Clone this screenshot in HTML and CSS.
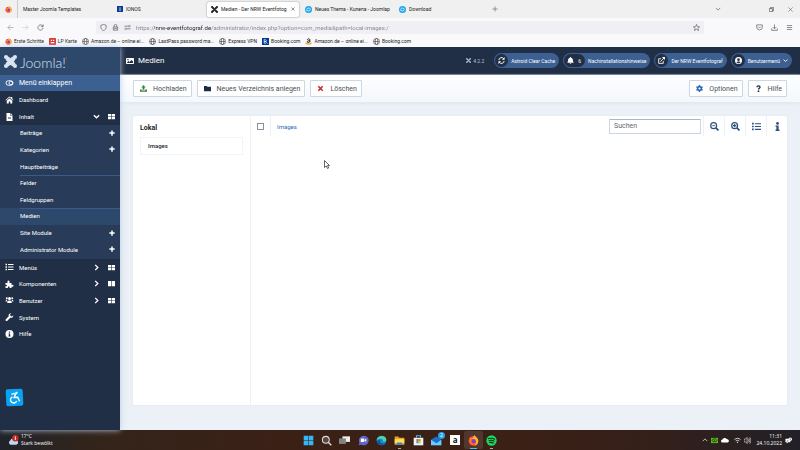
FILE: index.html
```html
<!DOCTYPE html>
<html lang="de">
<head>
<meta charset="utf-8">
<title>Medien - Der NRW Eventfotograf</title>
<link rel="stylesheet" href="styles.css">
</head>
<body>
<svg class="defs" aria-hidden="true">
  <symbol id="joomla" viewBox="0 0 16 16"><g fill="none" stroke="currentColor" stroke-width="2.800"><path d="M3 3l8 8M13 3l-8 8M3 13l8-8M13 13L5 5"/><path d="M5 2.500L8 5.500l3-3M5 13.500l3-3 3 3M2.500 5l3 3-3 3M13.500 5l-3 3 3 3" stroke-width="2"/></g><circle cx="2.500" cy="2.500" r="2.500"/><circle cx="13.500" cy="2.500" r="2.500"/><circle cx="2.500" cy="13.500" r="2.500"/><circle cx="13.500" cy="13.500" r="2.500"/></symbol>
  <symbol id="firefox" viewBox="0 0 16 16"><circle cx="8" cy="8.500" r="7" fill="#ff4b35"/><path d="M2 5c2-1 3 0 4 0 2-1 2-4 4-5 0 3 5 4 5 9a7 7 0 0 1-6 6.500c4-3 3-8 0-9C6 5 4 8 2 5z" fill="#ffb52b"/><circle cx="8" cy="9" r="3.200" fill="#7542c8"/><path d="M1 8c2 0 3-2 6-1l-2 2c0 3 4 4 6 2-1 4-9 5-10-3z" fill="#ff6b2b"/></symbol>
  <symbol id="globe" viewBox="0 0 16 16"><g fill="none" stroke="currentColor" stroke-width="1.200"><circle cx="8" cy="8" r="7"/><ellipse cx="8" cy="8" rx="3" ry="7"/><path d="M1.500 8h13"/></g></symbol>
  <symbol id="kunena" viewBox="0 0 16 16"><circle cx="8" cy="8" r="8" fill="#1ca6ed"/><path d="M4 11V8a4 4 0 0 1 7-2M12 6v2a4 4 0 0 1-7 2" fill="none" stroke="#fff" stroke-width="1.600"/></symbol>
  <symbol id="plus" viewBox="0 0 16 16"><path d="M6 1h4v5h5v4h-5v5H6v-5H1V6h5z"/></symbol>
  <symbol id="grid" viewBox="0 0 16 16"><path d="M0 2h7.300v5.400H0zM8.700 2H16v5.400H8.700zM0 8.700h7.300V14H0zM8.700 8.700H16V14H8.700z"/></symbol>
  <symbol id="columns" viewBox="0 0 16 16"><path d="M0 2h7.300v12H0zM8.700 2H16v12H8.700z"/></symbol>
  <symbol id="down" viewBox="0 0 16 16"><path d="M2 5l6 6 6-6" fill="none" stroke="currentColor" stroke-width="3"/></symbol>
  <symbol id="right" viewBox="0 0 16 16"><path d="M5 2l6 6-6 6" fill="none" stroke="currentColor" stroke-width="3"/></symbol>
  <symbol id="thin-down" viewBox="0 0 16 16"><path d="M2 5l6 6 6-6" fill="none" stroke="currentColor" stroke-width="1.500"/></symbol>
  <symbol id="list" viewBox="0 0 16 16"><path d="M0 1.500h3v3H0zM5 2h11v2H5zM0 6.500h3v3H0zM5 7h11v2H5zM0 11.500h3v3H0zM5 12h11v2H5z"/></symbol>
  <symbol id="info" viewBox="0 0 16 16"><circle cx="8" cy="2.500" r="2.500"/><path d="M4.500 6H10v7.500h1.500V16h-7v-2.500H6v-5H4.500z"/></symbol>
  <symbol id="external" viewBox="0 0 16 16"><path d="M12 9v5.500H1.500V4H7M5.500 10.500L14 2" fill="none" stroke="currentColor" stroke-width="2"/><path d="M9 0h7v7z"/></symbol>
  <symbol id="lens" viewBox="0 0 16 16"><path d="M10.500 10.500L15 15" stroke="currentColor" stroke-width="3"/><circle cx="6.500" cy="6.500" r="5.200" fill="none" stroke="currentColor" stroke-width="2.200"/></symbol>
</svg>

<header class="browser">
  <div class="tabs">
    <div class="pin"><svg class="i7"><use href="#firefox"/></svg></div>
    <div class="tab"><span class="label">Master Joomla Templates</span></div>
    <div class="tab"><svg class="i6" viewBox="0 0 16 16"><path fill="#0b3d91" d="M0 0h16v16H0z"/><path fill="#fff" d="M7 3h2v10H7z"/></svg><span class="label">IONOS</span></div>
    <div class="tab active"><svg class="i7"><use href="#joomla"/></svg><span class="label">Medien - Der NRW Eventfotog</span><button class="plain" aria-label="Tab schließen"><svg class="i4" viewBox="0 0 16 16"><path d="M2 2l12 12M14 2L2 14" stroke="currentColor" stroke-width="2"/></svg></button></div>
    <div class="tab"><svg class="i7"><use href="#kunena"/></svg><span class="label">Neues Thema - Kunena - Joomlap</span></div>
    <div class="tab"><svg class="i7"><use href="#kunena"/></svg><span class="label">Download</span></div>
    <button class="plain newtab" aria-label="Neuer Tab"><svg class="i6" viewBox="0 0 16 16"><path d="M8 1v14M1 8h14" stroke="currentColor" stroke-width="1.500"/></svg></button>
    <div class="window">
      <button class="plain" aria-label="Tabs auflisten"><svg class="i6"><use href="#thin-down"/></svg></button>
      <button class="plain restore" aria-label="Verkleinern"><svg class="i5" viewBox="0 0 16 16"><path d="M1 5h10v10H1zM5 5V1h10v11h-4" fill="none" stroke="currentColor" stroke-width="2"/></svg></button>
      <button class="plain" aria-label="Schließen"><svg class="i5" viewBox="0 0 16 16"><path d="M1 1l14 14M15 1L1 15" stroke="currentColor" stroke-width="1.500"/></svg></button>
    </div>
  </div>
  <div class="navbar">
    <div class="history">
      <button class="plain" aria-label="Zurück"><svg class="i7" viewBox="0 0 16 16"><path d="M15 8H2M8 2L2 8l6 6" fill="none" stroke="#999" stroke-width="1.500"/></svg></button>
      <button class="plain" aria-label="Vor"><svg class="i7" viewBox="0 0 16 16"><path d="M1 8h13M8 2l6 6-6 6" fill="none" stroke="#ccc" stroke-width="1.500"/></svg></button>
      <button class="plain" aria-label="Neu laden"><svg class="i7" viewBox="0 0 16 16"><path d="M14 9a6 6 0 1 1-2-5.500L14 5M14 1v5H9" fill="none" stroke="#555" stroke-width="1.500"/></svg></button>
    </div>
    <div class="urlbar">
      <svg class="i7" viewBox="0 0 16 16"><path d="M8 1l6 2v4c0 4-2 6.500-6 8-4-1.500-6-4-6-8V3z" fill="none" stroke="currentColor" stroke-width="1.500"/></svg>
      <svg class="i7" viewBox="0 0 16 16"><path d="M3 7h10v7H3zM5 7V4a3 3 0 0 1 6 0v3M5 10.500h6" fill="none" stroke="currentColor" stroke-width="1.500"/></svg>
      <svg class="i7" viewBox="0 0 16 16"><path d="M1 5h10M5 11h10" stroke="currentColor" stroke-width="1.500"/><circle cx="12.500" cy="5" r="2" fill="none" stroke="currentColor"/><circle cx="3.500" cy="11" r="2" fill="none" stroke="currentColor"/></svg>
      <input class="url" aria-label="Adresse" value="https://nrw-eventfotograf.de/administrator/index.php?option=com_media&amp;path=local-images:/">
      <button class="plain" aria-label="Lesezeichen setzen"><svg class="i7" viewBox="0 0 16 16"><path d="M8 1l2 5 5 .5-3.800 3.300L12.500 15 8 12l-4.500 3 1.300-5.200L1 6.500 6 6z" fill="none" stroke="#444" stroke-width="1.300"/></svg></button>
    </div>
    <div class="tools">
      <button class="plain" aria-label="Pocket"><svg class="i7" viewBox="0 0 16 16"><path d="M1.500 2h13v5a6.500 6.500 0 0 1-13 0zM5 6l3 3 3-3" fill="none" stroke="currentColor" stroke-width="1.500"/></svg></button>
      <button class="plain" aria-label="Downloads"><svg class="i7" viewBox="0 0 16 16"><path d="M8 1v9M4 7l4 4 4-4M1.500 10v4.500h13V10" fill="none" stroke="currentColor" stroke-width="1.500"/></svg></button>
      <button class="plain" aria-label="Menü"><svg class="i7" viewBox="0 0 16 16"><path d="M2 3.500h12M2 8h12M2 12.500h12" stroke="currentColor" stroke-width="1.500"/></svg></button>
    </div>
  </div>
  <nav class="bookmarks">
    <a href="#"><svg class="i7"><use href="#firefox"/></svg>Erste Schritte</a>
    <a href="#"><svg class="i7" viewBox="0 0 16 16"><rect width="16" height="16" rx="2" fill="#d93a32"/><path d="M4 4h3v3H4zM9 4h3v3H9zM4 9h8v3H4z" fill="#fff"/></svg>LP Karte</a>
    <a href="#"><svg class="i7"><use href="#globe"/></svg>Amazon.de – online ei...</a>
    <a href="#"><svg class="i7"><use href="#globe"/></svg>LastPass password ma...</a>
    <a href="#"><svg class="i7"><use href="#globe"/></svg>Express VPN</a>
    <a href="#"><svg class="i7" viewBox="0 0 16 16"><path fill="#003b95" d="M0 0h16v16H0z"/><path d="M5 3v9h3a2 2 0 0 0 0-4H5h3a2 2 0 0 0 0-4H5" fill="none" stroke="#fff" stroke-width="1.500"/><circle cx="12.500" cy="12" r="1.200" fill="#4bb8ff"/></svg>Booking.com</a>
    <a href="#"><svg class="i7" viewBox="0 0 16 16"><path d="M5 4c1-3 6-3 6 0v6M11 6C7 6 5 7 5 9s4 2 6-1" fill="none" stroke="#111" stroke-width="2"/><path d="M1 11c5 4 10 4 14 0" fill="none" stroke="#f90" stroke-width="2.500"/></svg>Amazon.de – online ei...</a>
    <a href="#"><svg class="i7"><use href="#globe"/></svg>Booking.com</a>
  </nav>
</header>

<div class="admin">
  <aside class="sidebar">
    <a class="brand" href="#"><svg class="i13"><use href="#joomla"/></svg><span>Joomla!<sup>’</sup></span></a>
    <button class="row toggle"><svg class="icon" viewBox="0 0 16 16"><rect x="1" y="3.500" width="14" height="9" rx="4.500" fill="none" stroke="currentColor" stroke-width="1.800"/><circle cx="10.500" cy="8" r="3.500" fill="none" stroke="currentColor" stroke-width="1.800"/></svg>Menü einklappen</button>
    <a class="row" href="#"><svg class="icon" viewBox="0 0 16 16"><path d="M0 8l8-7 3 2.600V2h2.500v3.800L16 8l-1 1.200-7-6-7 6z"/><path d="M2.500 9.500L8 5l5.500 4.500V15h-4v-4h-3v4h-4z"/></svg>Dashboard</a>
    <a class="row" href="#"><svg class="icon" viewBox="0 0 16 16"><path fill-rule="evenodd" d="M2 0h7v5h5v11H2zM5 8v1h6V8zM5 11v1h6v-1z"/><path d="M10 0l4 4h-4z"/></svg><span class="name">Inhalt</span><svg class="i7"><use href="#down"/></svg><svg class="i7"><use href="#grid"/></svg></a>
    <ul class="submenu">
      <li><a href="#">Beiträge</a><a href="#" aria-label="Neuer Beitrag"><svg class="i6"><use href="#plus"/></svg></a></li>
      <li><a href="#">Kategorien</a><a href="#" aria-label="Neue Kategorie"><svg class="i6"><use href="#plus"/></svg></a></li>
      <li><a href="#">Hauptbeiträge</a></li>
      <li class="ruled"><a href="#">Felder</a></li>
      <li><a href="#">Feldgruppen</a></li>
      <li class="ruled current"><a href="#">Medien</a></li>
      <li><a href="#">Site Module</a><a href="#" aria-label="Neues Site Modul"><svg class="i6"><use href="#plus"/></svg></a></li>
      <li><a href="#">Administrator Module</a><a href="#" aria-label="Neues Administrator Modul"><svg class="i6"><use href="#plus"/></svg></a></li>
    </ul>
    <nav class="mainmenu">
      <a class="row" href="#"><svg class="icon"><use href="#list"/></svg><span class="name">Menüs</span><svg class="i7"><use href="#right"/></svg><svg class="i7"><use href="#grid"/></svg></a>
      <a class="row" href="#"><svg class="icon" viewBox="0 0 16 16"><path d="M0 6h4.500C3 4 4 1 6 1s3 3 1.500 5H12v4c2-1.500 4-.5 4 1.500s-2 3-4 1.500v3H8c1-2 0-3-1.500-3S4 14 5 16H0v-4c2 1 3 0 3-1s-1-2-3-1z"/></svg><span class="name">Komponenten</span><svg class="i7"><use href="#right"/></svg><svg class="i7"><use href="#columns"/></svg></a>
      <a class="row" href="#"><svg class="icon" viewBox="0 0 16 16"><circle cx="8" cy="5" r="3"/><circle cx="2.500" cy="4.500" r="2"/><circle cx="13.500" cy="4.500" r="2"/><path d="M3.500 14v-2c0-4 9-4 9 0v2zM0 11c0-3.500 3-4 4-3C3 9 2.500 10 2.500 11zM16 11c0-3.500-3-4-4-3 1 .5 1.500 2 1.500 3z"/></svg><span class="name">Benutzer</span><svg class="i7"><use href="#right"/></svg><svg class="i7"><use href="#grid"/></svg></a>
      <a class="row" href="#"><svg class="icon" viewBox="0 0 16 16"><path d="M15.500 4.500L13 7l-3-1-1-3 2.500-2.500C8 0 5.500 3 6.500 6.500L.7 12.300a2 2 0 0 0 3 3l5.800-5.800c3.500 1 6.500-1.500 6-5z"/></svg><span class="name">System</span></a>
      <a class="row" href="#"><svg class="icon" viewBox="0 0 16 16"><path fill-rule="evenodd" d="M8 0a8 8 0 1 0 0 16A8 8 0 0 0 8 0zM6.800 3h2.400v2.400H6.800zM6 6.800h3.200v4.400H10V13H6v-1.800h.8V8.500H6z"/></svg><span class="name">Hilfe</span></a>
    </nav>
    <button class="access" aria-label="Barrierefreiheit"><svg viewBox="0 0 16 16"><g fill="none" stroke="#fff" stroke-width="1.700"><path d="M4.500 4L7.500 3l2 1.500L7.500 8H12l2 5M5.500 7a4 4 0 1 0 5 5.500"/></g><circle cx="10.700" cy="2.500" r="1.500" fill="#fff"/></svg></button>
  </aside>

  <div class="page">
    <div class="topbar">
      <h1><svg class="i8" viewBox="0 0 16 16"><path fill-rule="evenodd" d="M1.500 2h13A1.500 1.500 0 0 1 16 3.500v9a1.500 1.500 0 0 1-1.500 1.500h-13A1.500 1.500 0 0 1 0 12.500v-9A1.500 1.500 0 0 1 1.500 2zM2 12h12V9l-3-3-4 4-2-2-3 3zM4 4a1.500 1.500 0 1 0 0 3 1.500 1.500 0 0 0 0-3z"/></svg>Medien</h1>
      <span class="version"><svg class="i5"><use href="#joomla"/></svg>4.2.2</span>
      <button class="pill"><span class="knob"><svg class="i7" viewBox="0 0 16 16"><path d="M2 7a6 6 0 0 1 11-3M14 9a6 6 0 0 1-11 3" fill="none" stroke="currentColor" stroke-width="2.200"/><path d="M15 0v6.500H9zM1 16V9.500h6z"/></svg></span>Astroid Clear Cache</button>
      <button class="pill"><span class="knob wide"><svg class="i7" viewBox="0 0 16 16"><path d="M7 0h2v1.500c3 .5 4.500 3 4.500 5.500 0 3 .5 3.500 1.500 5v1H1v-1c1-1.500 1.500-2 1.500-5C2.500 4.500 4 2 7 1.500zM6 14h4c0 2.500-4 2.500-4 0z"/></svg>6</span>Nachinstallationshinweise</button>
      <a class="pill" href="#"><span class="knob"><svg class="i7"><use href="#external"/></svg></span>Der NRW Eventfotograf</a>
      <button class="pill"><span class="knob"><svg class="i7" viewBox="0 0 16 16"><path fill-rule="evenodd" d="M8 0a8 8 0 1 0 0 16A8 8 0 0 0 8 0zM8 3a3 3 0 1 1 0 6 3 3 0 0 1 0-6zM3.500 12.500c1-3 8-3 9 0-2 2.500-7 2.500-9 0z"/></svg></span>Benutzermenü<svg class="i5"><use href="#down"/></svg></button>
    </div>

    <div class="toolbar">
      <button class="btn upload"><svg class="i7" viewBox="0 0 16 16"><path d="M8 0l5 5.500h-3V11H6V5.500H3zM0 10h4v2.500h8V10h4v5.500H0z"/></svg>Hochladen</button>
      <button class="btn folder"><svg class="i7" viewBox="0 0 16 16"><path d="M0 2h6l2 2h8v10H0z"/></svg>Neues Verzeichnis anlegen</button>
      <button class="btn delete"><svg class="i7" viewBox="0 0 16 16"><path d="M3 3l10 10M13 3L3 13" stroke="currentColor" stroke-width="3.500"/></svg>Löschen</button>
      <span class="spacer"></span>
      <button class="btn options"><svg class="i7" viewBox="0 0 16 16"><path fill-rule="evenodd" d="M6.500 0h3l.5 2.300 2 1.100 2.300-.7 1.500 2.600L14 7v2l1.800 1.700-1.500 2.600-2.300-.7-2 1.100-.5 2.300h-3L6 13.700l-2-1.100-2.300.7-1.500-2.600L2 9V7L.2 5.300l1.500-2.600 2.300.7 2-1.100zM8 5.500a2.500 2.500 0 1 0 0 5 2.500 2.500 0 0 0 0-5z"/></svg>Optionen</button>
      <button class="btn help"><svg class="i7" viewBox="0 0 16 16"><path d="M4.500 5c0-4 7-4 7 0 0 2.500-3.500 2-3.500 5.500" fill="none" stroke="currentColor" stroke-width="3"/><circle cx="8" cy="14" r="2"/></svg>Hilfe</button>
    </div>

    <main class="media">
      <nav class="tree">
        <h2>Lokal</h2>
        <a href="#">Images</a>
      </nav>
      <section class="browserpane">
        <div class="mediabar">
          <label class="check"><input type="checkbox" aria-label="Alle auswählen"></label>
          <a class="crumb" href="#">Images</a>
          <input class="search" type="text" placeholder="Suchen" aria-label="Suchen">
          <button class="tool" aria-label="Verkleinern"><svg class="i9" viewBox="0 0 16 16"><use href="#lens"/><path d="M4 6.500h5" stroke="currentColor" stroke-width="1.500"/></svg></button>
          <button class="tool" aria-label="Vergrößern"><svg class="i9" viewBox="0 0 16 16"><use href="#lens"/><path d="M3.500 6.500h6M6.500 3.500v6" stroke="currentColor" stroke-width="2"/></svg></button>
          <button class="tool" aria-label="Liste"><svg class="i9"><use href="#list"/></svg></button>
          <button class="tool" aria-label="Info"><svg class="i9"><use href="#info"/></svg></button>
        </div>
      </section>
    </main>
  </div>
</div>

<footer class="taskbar">
  <button class="weather">
    <svg class="cloud" viewBox="0 0 24 24"><path d="M5 21a5 5 0 0 1 0-9 6 6 0 0 1 11-1 5 5 0 0 1 2 10z" fill="#bcd7f7"/><circle cx="16" cy="7" r="7" fill="#c9271e"/><path d="M16 3v8" stroke="#fff" stroke-width="2"/></svg>
    <span>17°C<br>Stark bewölkt</span>
  </button>
  <div class="apps">
    <button aria-label="Start"><svg viewBox="0 0 16 16"><path fill="#35b8f5" d="M1 1h6.600v6.600H1zM8.400 1H15v6.600H8.400zM1 8.400h6.600V15H1zM8.400 8.400H15V15H8.400z"/></svg></button>
    <button aria-label="Suche"><svg viewBox="0 0 16 16"><path d="M10.500 10.500L15 15" stroke="#ddd" stroke-width="2"/><circle cx="7" cy="7" r="5" fill="#5a4741" stroke="#ddd" stroke-width="1.500"/></svg></button>
    <button aria-label="Taskansicht"><svg viewBox="0 0 16 16"><path fill="#eee" d="M5 2h11v8H5z"/><path fill="#85817f" d="M0 5h10v8H0z"/></svg></button>
    <button aria-label="Chat"><svg viewBox="0 0 16 16"><path d="M8 1a7 7 0 1 1-3 13l-4 1 1-4A7 7 0 0 1 8 1z" fill="#6264c7"/><path d="M4 5h5v5H4zM9 7.500L12 5v5z" fill="#fff"/></svg></button>
    <button aria-label="Edge"><svg viewBox="0 0 16 16"><circle cx="8" cy="8" r="7" fill="#1686d9"/><path d="M1 8C1 0 15-1 15 7c0 3-5 4-5 1S4 4 1 8z" fill="#50d2a0"/><path d="M6 7c-2 4 3 7 8 5-3 4-12 3-12-2 0-3 3-3 4-3z" fill="#0b559e"/></svg></button>
    <button class="open" aria-label="Explorer"><svg viewBox="0 0 16 16"><path fill="#e7a51b" d="M1 2h5l2 2h7v10H1z"/><path fill="#ffdc65" d="M1 6h14v6H1z"/><path fill="#2d86ce" d="M4 11h8v3H4z"/></svg></button>
    <button aria-label="Store"><svg viewBox="0 0 16 16"><path fill="#f2f2f2" d="M1 4h14v11H1z"/><path d="M5 4V1h6v3" fill="none" stroke="#5ab8e8" stroke-width="1.500"/><path fill="#e54c2e" d="M5 6h3v3H5z"/><path fill="#6bb52c" d="M8 6h3v3H8z"/><path fill="#1b94e0" d="M5 9h3v3H5z"/><path fill="#f5b51b" d="M8 9h3v3H8z"/></svg></button>
    <button class="mail" aria-label="Mail"><svg viewBox="0 0 16 16"><path fill="#1773c7" d="M0 7l8-5 7 5v8H0z"/><path fill="#76c8fa" d="M0 7l8 5 7-5v8H0z"/></svg><span class="badge">2</span></button>
    <button aria-label="Amazon"><span class="amazon">a</span></button>
    <button class="open running" aria-label="Firefox"><svg><use href="#firefox"/></svg></button>
    <button class="open" aria-label="Spotify"><svg viewBox="0 0 16 16"><circle cx="8" cy="8" r="7.500" fill="#1ed760"/><path d="M3 5.500c3-1 7-1 10 1M4 8.300c3-1 6-.5 8 1M4.500 11c2-.5 4.500-.5 6.500 1" fill="none" stroke="#10301c" stroke-width="1.600"/></svg></button>
  </div>
  <div class="tray">
    <svg class="i6" viewBox="0 0 16 16"><path d="M2 11l6-6 6 6" fill="none" stroke="currentColor" stroke-width="1.800"/></svg>
    <svg class="i7" viewBox="0 0 16 16"><path d="M0 2h16v12H0z" fill="#62b51e"/><path d="M2 8c3-5 9-5 12 0-3 4-9 4-12 0zM6 6l4 4" fill="none" stroke="#173b08" stroke-width="1.800"/></svg>
    <svg class="i8" viewBox="0 0 16 16"><path d="M3 13a3 3 0 0 1 0-6c1-4 7-4 8-1 6 0 6 7 2 7z"/></svg>
    <span class="status"><svg class="i7" viewBox="0 0 16 16"><path d="M1 6c4-4 10-4 14 0M4 9c3-2 5-2 8 0" fill="none" stroke="currentColor" stroke-width="1.700"/><path d="M6 11h4l-2 3z"/></svg>
    <svg class="i7" viewBox="0 0 16 16"><path d="M0 5h3l4-4v14l-4-4H0zM9 5c2 2 2 4 0 6M11 3c3 3 3 7 0 10M13 1c4 4 4 10 0 14" fill="none" stroke="currentColor" stroke-width="1.300"/></svg></span>
    <span class="clock">11:31<br>24.10.2022</span>
    <svg class="i7" viewBox="0 0 16 16"><path d="M1 4h11v8H7l-3 3v-3H1z"/><circle cx="12" cy="5" r="4"/><path d="M12 3v4M4 9h4" stroke="#333" stroke-width="1.500"/></svg>
  </div>
</footer>

<svg class="cursor" viewBox="0 0 12 18" aria-hidden="true"><path d="M1 1v14l3.500-3 2.500 5 2.500-1.200L7 11h4z" fill="#fff" stroke="#222" stroke-width="1.400"/></svg>
</body>
</html>
```
FILE: styles.css
```css
* { box-sizing: border-box; }

body {
  margin: 0;
  min-height: 100vh;
  display: flex;
  flex-direction: column;
  font-family: Roboto, sans-serif;
  font-size: 6px;
  color: #22262a;
  background: #ebf1f6;
}

button, input { font: inherit; color: inherit; margin: 0; }
button { border: 0; padding: 0; background: none; }
a { color: inherit; text-decoration: none; }
svg { display: block; flex: none; fill: currentColor; }

.defs { position: absolute; width: 0; height: 0; }
.i4 { width: 4px; height: 4px; }
.i5 { width: 5px; height: 5px; }
.i6 { width: 6px; height: 6px; }
.i7 { width: 7px; height: 7px; }
.i8 { width: 8px; height: 8px; }
.i9 { width: 9px; height: 9px; }
.i13 { width: 13px; height: 13px; }

/* Browser window */
.browser { font-size: 5px; background: #f9f9fb; color: #222; }
.plain { display: flex; align-items: center; }

.tabs { display: flex; align-items: center; height: 18px; background: #f0f0f0; }
.pin { display: flex; align-items: center; justify-content: center; width: 18px; height: 18px; border-right: 1px solid #ccc; }
.tab { display: flex; align-items: center; gap: 3px; width: 92px; height: 15px; margin: 0 1px; padding: 0 4px; white-space: nowrap; }
.tab.active { background: #fff; border-radius: 2px; box-shadow: 0 0 2px #888; }
.label { flex: 1; }
.newtab { margin-left: 4px; color: #555; }
.window { display: flex; align-items: center; gap: 14px; margin-left: auto; padding-right: 7px; color: #444; }
.restore { margin-left: 34px; }

.navbar { display: flex; align-items: center; height: 18px; color: #555; }
.history { display: flex; gap: 8px; width: 96px; padding-left: 7px; }
.urlbar { flex: 1; display: flex; align-items: center; gap: 5px; height: 13px; padding: 0 4px; border-radius: 2px; background: #f0f0f4; }
.url { flex: 1; min-width: 0; border: 0; padding: 0; font-size: 6px; color: transparent; background: linear-gradient(to right, #83838a 18px, #222 18px, #222 75px, #83838a 75px) text; }
.tools { display: flex; justify-content: flex-end; gap: 8px; width: 96px; padding-right: 7px; }

.bookmarks { display: flex; align-items: center; gap: 5px; height: 11px; padding-left: 5px; padding-bottom: 1px; white-space: nowrap; }
.bookmarks a { display: flex; align-items: center; gap: 2px; }

/* Administrator */
.admin { flex: 1; display: flex; }
.sidebar { position: relative; flex: none; width: 120px; background: #212f46; color: #fff; box-shadow: 0 0 6px #b9cbe3; }
.brand { display: flex; align-items: center; gap: 3px; height: 28px; padding-left: 4px; background: #2e486c; font-family: Lato, sans-serif; font-weight: 300; font-size: 14px; line-height: 16px; color: #dce6f2; }
.brand sup { font-size: 6px; }
.row { display: flex; align-items: center; gap: 8px; height: 17px; padding: 0 5px; }
.row .icon { width: 9px; height: 8px; margin-right: -3px; }
.name { flex: 1; }
.toggle { width: 100%; height: 16px; background: #3d6092; font-size: 7px; }

.submenu { display: grid; grid-auto-rows: 1fr; min-height: 134px; margin: 0; padding: 0 0 1px; list-style: none; background: #283c5a; }
.submenu li { display: flex; align-items: center; justify-content: space-between; padding: 0 5px 1px 20px; }
.ruled { background: linear-gradient(#3a5a87, #3a5a87) 20px 0 / 100% 1px no-repeat; }
.current { background-color: #2e486c; }
.mainmenu { display: grid; grid-auto-rows: 1fr; min-height: 83px; }
.mainmenu .row { height: auto; }

.access { position: absolute; left: 6px; bottom: 24px; width: 17px; height: 17px; padding: 2px; border-radius: 2px; background: #0aa2f0; transform: rotate(-3deg); }
.access svg { width: 13px; height: 13px; }

.page { flex: 1; min-width: 0; display: flex; flex-direction: column; }
.topbar { display: flex; align-items: center; gap: 4px; height: 28px; padding: 0 8px 0 6px; background: #212f46; color: #fff; border-bottom: 1px solid #61708a; font-size: 5px; white-space: nowrap; }
.topbar h1 { display: flex; align-items: center; gap: 4px; margin: 0 auto 0 0; font-size: 8px; font-weight: 400; }
.version { display: flex; align-items: center; gap: 2px; margin-right: 6px; color: #b8c3d3; }
.pill { display: flex; align-items: center; gap: 3px; height: 15px; padding: 0 4px 0 1px; border-radius: 8px; background: #3d6092; color: #fff; }
.knob { display: flex; align-items: center; justify-content: center; gap: 4px; min-width: 13px; height: 13px; border-radius: 7px; background: #212f46; }
.knob.wide { padding: 0 4px 0 3px; }

.toolbar { display: flex; align-items: center; gap: 5px; padding: 5px 13px; background: linear-gradient(#fdfeff, #f4f7fb); box-shadow: 0 1px 3px #dbe4ee; font-size: 7px; white-space: nowrap; }
.btn { display: flex; align-items: center; gap: 6px; height: 17px; padding: 0 4px 0 6px; border: 1px solid #cdd7e4; border-radius: 1px; background: #fff; color: #495057; }
.spacer { flex: 1; }
.upload svg { color: #3b8247; }
.folder svg, .help svg { color: #1b2c47; }
.delete svg { color: #c52827; }
.options svg { color: #2a69b8; }

.media { flex: 1; display: flex; margin: 14px 13px 25px; background: #fff; border-radius: 2px; box-shadow: 0 0 2px #dbe4ee; }
.tree { width: 118px; padding: 7px; border-right: 1px solid #ebf1f6; }
.tree h2 { margin: 0; font-size: 7px; line-height: 10px; font-weight: 700; }
.tree a { display: block; margin-top: 4px; padding: 0 7px; border: 1px solid #f2f4f8; line-height: 16px; font-weight: 500; }
.browserpane { flex: 1; }
.mediabar { display: flex; align-items: center; height: 20px; }
.check { display: flex; align-items: center; justify-content: center; width: 20px; height: 20px; border-right: 1px solid #ebf1f6; }
.check input { appearance: none; width: 7px; height: 7px; border: 1px solid #85909d; background: #fff; }
.crumb { flex: 1; padding-left: 6px; color: #2a69b8; }
.search { width: 92px; height: 15px; margin-right: 2px; padding: 0 4px; border: 1px solid #ccd6e3; border-top-color: #a9b9cc; border-radius: 1px; background: #fff; font-size: 7px; }
.search::placeholder { color: #60686f; opacity: 1; }
.tool { display: flex; align-items: center; justify-content: center; width: 21px; height: 20px; border-left: 1px solid #ebf1f6; color: #2f5080; }

/* Desktop taskbar */
.taskbar { display: grid; grid-template-columns: 1fr auto 1fr; align-items: center; height: 20px; padding: 0 8px; background: linear-gradient(to right, #20232a, #33241a 12%, #3b2016 35%, #3b2016 65%, #34201a 82%, #222027); color: #fff; font-family: "Open Sans", sans-serif; font-size: 5px; line-height: 7px; }
.weather { display: flex; align-items: center; gap: 2px; text-align: left; }
.cloud { width: 11px; height: 11px; }
.apps { display: grid; grid-template-columns: repeat(11, 1fr); width: 202px; }
.apps button { position: relative; display: flex; align-items: center; justify-content: center; height: 18px; border-radius: 2px; }
.apps svg { width: 11px; height: 11px; }
.amazon { width: 10px; background: #fff; color: #111; font-size: 8px; font-weight: 700; line-height: 10px; }
.badge { position: absolute; top: 1px; right: 1px; width: 7px; border-radius: 4px; background: #2ba2e8; line-height: 7px; }
.open::after { content: ""; position: absolute; bottom: 0; width: 3px; height: 1px; background: #aaa; }
.running { background: #51382e; }
.running::after { width: 7px; background: #4cbcff; }
.tray { display: flex; align-items: center; justify-content: flex-end; gap: 3px; }
.status { display: flex; gap: 3px; margin-left: 2px; }
.clock { margin-left: 3px; text-align: right; }

.cursor { position: absolute; left: 324px; top: 160px; width: 6px; height: 9px; }
```
